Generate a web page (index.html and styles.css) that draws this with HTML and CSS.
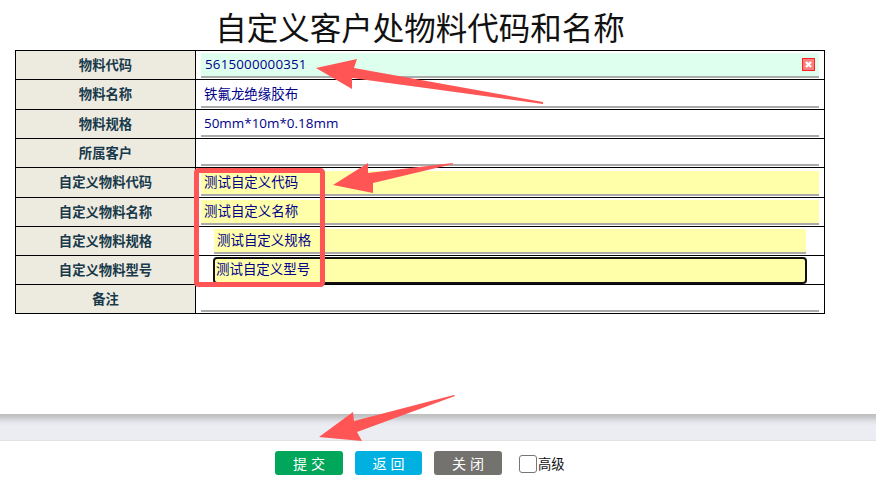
FILE: index.html
```html
<!DOCTYPE html>
<html lang="zh-CN">
<head>
<meta charset="utf-8">
<title>自定义客户处物料代码和名称</title>
<link rel="stylesheet" href="styles.css">
</head>
<body>
<main class="main">
  <h1 class="title">自定义客户处物料代码和名称</h1>
  <table class="form">
    <tr class="first">
      <th>物料代码</th>
      <td><div class="field field-code"><span>5615000000351</span>
        <svg class="clear" viewBox="0 0 13 13" width="13" height="13"><rect x="0.5" y="0.5" width="12" height="12" fill="#fb7f7f" stroke="#ff2020"/><path d="M4 4l5 5M9 4l-5 5" stroke="#fff" stroke-width="2.4"/></svg></div></td>
    </tr>
    <tr class="tall"><th>物料名称</th><td><div class="field">铁氟龙绝缘胶布</div></td></tr>
    <tr><th>物料规格</th><td><div class="field">50mm*10m*0.18mm</div></td></tr>
    <tr><th>所属客户</th><td><div class="field"></div></td></tr>
    <tr class="tall"><th>自定义物料代码</th><td><div class="field yellow">测试自定义代码</div></td></tr>
    <tr><th>自定义物料名称</th><td><div class="field yellow">测试自定义名称</div></td></tr>
    <tr><th>自定义物料规格</th><td><div class="field yellow inset">测试自定义规格</div></td></tr>
    <tr><th>自定义物料型号</th><td><div class="field yellow inset focus">测试自定义型号</div></td></tr>
    <tr><th>备注</th><td><div class="field"></div></td></tr>
  </table>
</main>
<div class="band"></div>
<footer class="actions">
  <button class="btn green">提交</button>
  <button class="btn blue">返回</button>
  <button class="btn gray">关闭</button>
  <label class="advanced"><span class="check"></span>高级</label>
</footer>
<svg class="marks" width="876" height="480" viewBox="0 0 876 480">
  <polygon points="316,68 357,59 354,68 543,102 543,104 352,78 352,89" fill="#ff5555"/>
  <polygon points="333,185 368,163 368,173 453,163 453,164 373,183 373,193" fill="#ff5555"/>
  <polygon points="319,437 353,412 354,421 454,395 455,396 357,432 362,441" fill="#ff5555"/>
  <rect x="196.500" y="170.500" width="126" height="114" rx="2" fill="none" stroke="#ff5555" stroke-width="5"/>
</svg>
</body>
</html>
```
FILE: styles.css
```css
* { box-sizing: border-box; }
html, body { margin: 0; padding: 0; }
body {
  position: relative;
  width: 876px;
  height: 480px;
  overflow: hidden;
  background: #fff;
  font-family: "Open Sans", "Noto Sans CJK SC", sans-serif;
  font-size: 13.33px;
}
.main { width: 810px; height: 414px; margin-left: 15px; }
.title {
  margin: 0;
  height: 50px;
  font-size: 31.5px;
  font-weight: 400;
  line-height: 56px;
  text-align: center;
  color: #111;
}
.form { width: 810px; table-layout: fixed; border-collapse: collapse; border: 1px solid #000; }
.form tr { height: 29px; }
.form tr.tall { height: 30px; }
.form th, .form td { border: 1px solid #000; padding: 0; }
.form th {
  width: 180px;
  padding-bottom: 2px;
  background: #edeae0;
  color: #17394a;
  font-size: 13.33px;
  font-weight: 700;
  text-align: center;
}
.form .first th { padding-bottom: 1px; }
.field {
  display: flex;
  align-items: center;
  justify-content: space-between;
  height: 25px;
  margin: 1px 5px 0 5px;
  padding: 0 3px 2px 3px;
  border-bottom: 2px solid #aaa;
  color: #00008b;
  font-size: 13.45px;
  line-height: 20px;
}
.tall .field { padding-bottom: 0; }
.field-code { background: #dfffee; padding-left: 4px; padding-bottom: 1px; letter-spacing: 0.2px; font-size: 13.33px; }
.clear { margin-right: 1px; }
.yellow { background: #ffffaa; }
.inset { margin: 1px 18px 0 18px; }
.focus {
  height: 27px;
  margin: 0 17px 0 17px;
  border: 2px solid #111;
  border-radius: 4px;
  padding-left: 1px;
}
.band {
  height: 27px;
  background: linear-gradient(#bdbdbd 0, #c6c8cb 3px, #e3e5ea 8px, #ebedf2 12px);
  border-bottom: 1px solid #e2e2e2;
}
.actions {
  display: flex;
  align-items: center;
  width: 840px;
  height: 39px;
  padding: 5px 0 0 275px;
  gap: 12px;
}
.btn {
  width: 68px;
  height: 24px;
  padding: 0;
  border: 0;
  border-radius: 3px;
  color: #fff;
  font: inherit;
  font-size: 14px;
  letter-spacing: 4px;
  text-indent: 4px;
}
.green { background: #00a65a; }
.blue { background: #00b0e0; width: 67px; }
.gray { background: #74726e; }
.advanced { display: flex; align-items: center; margin-left: 5px; color: #111; font-size: 13.33px; }
.check {
  width: 18px;
  height: 18px;
  margin-top: 2px;
  margin-right: 1px;
  border: 1px solid #767676;
  border-radius: 3px;
  background: #fff;
}
.marks { position: absolute; left: 0; top: 0; pointer-events: none; }
```
